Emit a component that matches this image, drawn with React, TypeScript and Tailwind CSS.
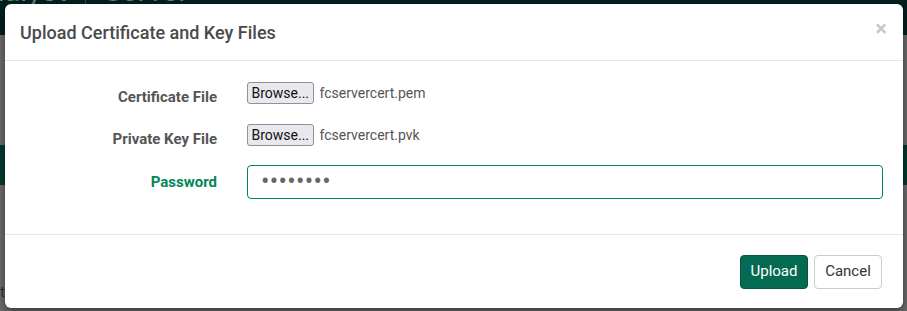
import React from "react";

const font = { fontFamily: "Roboto, 'Liberation Sans', sans-serif" };

function FileRow({ label, file }: { label: string; file: string }) {
  return (
    <div className="flex h-[25px] items-start">
      <label className="w-[212px] pt-[5px] text-right text-[15px] font-bold leading-[20px] text-[#555]">
        {label}
      </label>
      <div className="ml-[30px] flex items-center gap-[6px]">
        <button className="h-[22px] rounded-[3px] border border-[#8f8f9d] bg-[#e9e9ed] px-[3.5px] text-[14px] leading-[18px] text-[#111]">
          Browse...
        </button>
        <span className="text-[14px] text-[#555]">{file}</span>
      </div>
    </div>
  );
}

export default function App() {
  return (
    <div className="relative h-[311px] w-[907px] overflow-hidden bg-[#6c6c6c]" style={font}>
      {/* page behind the overlay */}
      <div className="flex h-[35px] items-start overflow-hidden bg-[#03201f]">
        <div className="-mt-[27px] flex items-center text-[30px] leading-[36px] text-[#6f7b7a]">
          <span className="-ml-[42px]">Catalyst</span>
          <span className="mx-[18px] h-[36px] border-l border-[#3a4a49]" />
          <span>Server</span>
        </div>
      </div>
      <div className="mt-[110px] h-[40px] w-full bg-[#053a30]" />
      <div className="mt-[97px] -ml-[8px] text-[14px] text-[#3b2a20]">Stat</div>

      {/* modal */}
      <div className="absolute left-[5px] top-[4px] flex h-[304px] w-[898px] flex-col rounded-[6px] bg-white shadow-[0_3px_9px_rgba(0,0,0,0.5)]">
        <div className="flex h-[57px] shrink-0 items-center justify-between border-b border-[#e5e5e5] pl-[15px] pr-[16px]">
          <h4 className="text-[18px] font-medium text-[#4a4a4a]">Upload Certificate and Key Files</h4>
          <span className="-mt-[6px] text-[22px] font-bold leading-none text-[#c9c9c9]">×</span>
        </div>

        <div className="flex-1 border-b border-[#e5e5e5] pt-[21px]">
          <FileRow label="Certificate File" file="fcservercert.pem" />
          <div className="mt-[17px]">
            <FileRow label="Private Key File" file="fcservercert.pvk" />
          </div>
          <div className="mt-[16px] flex items-center">
            <label className="w-[212px] text-right text-[15px] font-bold text-[#00875a]">Password</label>
            <input
              type="password"
              defaultValue="12345678"
              className="ml-[30px] h-[34px] w-[636px] rounded-[4px] border border-[#00875a] px-[13px] text-[25px] tracking-[0.3px] text-[#666] outline-none"
            />
          </div>
        </div>

        <div className="flex h-[73px] shrink-0 items-center justify-end gap-[6px] pr-[21px]">
          <button className="h-[34px] w-[68px] rounded-[4px] border border-[#04543f] bg-[#046a52] text-[15px] text-white">
            Upload
          </button>
          <button className="h-[34px] w-[68px] rounded-[4px] border border-[#ccc] bg-white text-[15px] text-[#333]">
            Cancel
          </button>
        </div>
      </div>
    </div>
  );
}
